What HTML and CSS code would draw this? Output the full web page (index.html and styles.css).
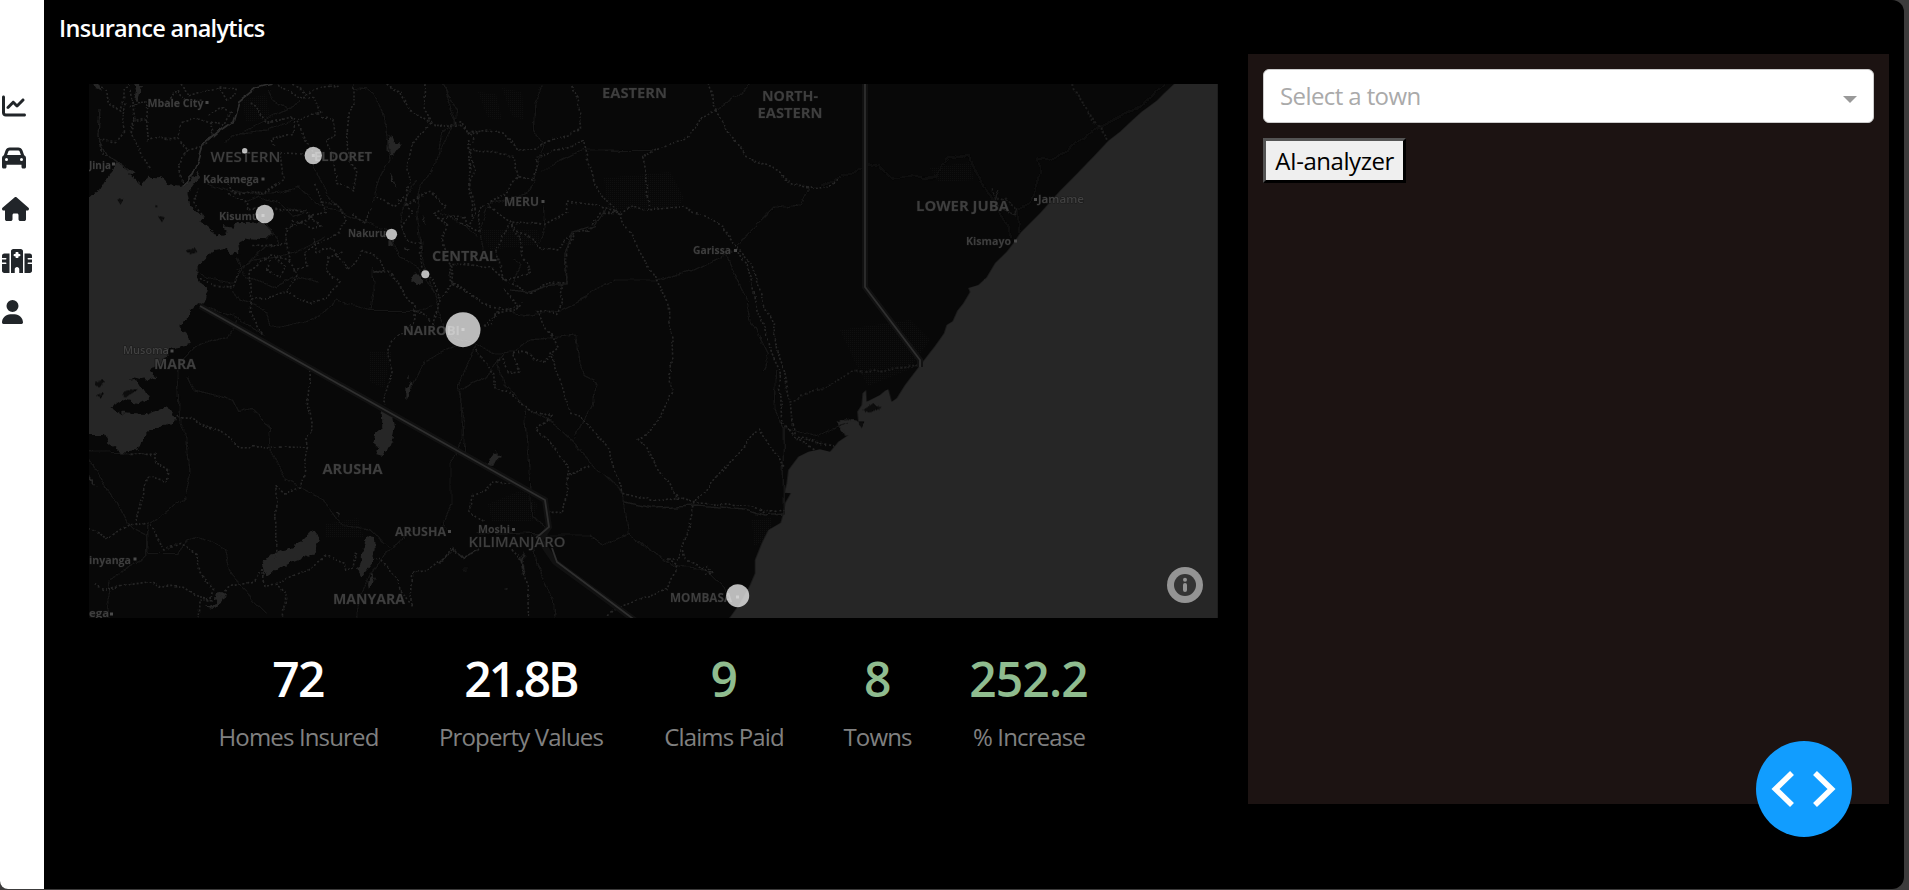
FILE: index.html
```html
<!DOCTYPE html>
<html lang="en">
<head>
<meta charset="utf-8">
<title>Insurance analytics</title>
<link rel="stylesheet" href="styles.css">
</head>
<body>
<div class="app">
  <nav class="sidebar">
    <svg class="nav-icon" viewBox="0 0 512 512"><path d="M64 64c0-17.700-14.300-32-32-32S0 46.300 0 64V400c0 44.200 35.800 80 80 80H480c17.700 0 32-14.300 32-32s-14.300-32-32-32H80c-8.800 0-16-7.200-16-16V64zm406.600 86.600c12.500-12.500 12.500-32.800 0-45.300s-32.800-12.500-45.300 0L320 210.700l-57.400-57.400c-12.500-12.500-32.800-12.500-45.300 0l-112 112c-12.500 12.500-12.500 32.800 0 45.300s32.800 12.500 45.300 0L240 221.300l57.400 57.400c12.500 12.500 32.800 12.500 45.300 0l128-128z"/></svg>
    <svg class="nav-icon" viewBox="0 0 512 512"><path d="M135.200 117.400L109.100 192H402.900l-26.100-74.600C372.300 104.600 360.200 96 346.600 96H165.400c-13.600 0-25.700 8.600-30.200 21.400zM39.600 196.800L74.800 96.300C88.300 57.800 124.600 32 165.400 32H346.600c40.800 0 77.100 25.800 90.600 64.300l35.200 100.500c23.200 9.600 39.600 32.500 39.600 59.200V448c0 17.700-14.300 32-32 32H448c-17.700 0-32-14.300-32-32V400H96v48c0 17.700-14.300 32-32 32H32c-17.700 0-32-14.300-32-32V256c0-26.700 16.400-49.600 39.600-59.200zM128 288a32 32 0 1 0-64 0 32 32 0 1 0 64 0zm288 32a32 32 0 1 0 0-64 32 32 0 1 0 0 64z"/></svg>
    <svg class="nav-icon w27" viewBox="0 0 576 512"><path d="M575.800 255.500c0 18-15 32.100-32 32.100h-32l.7 160.200c0 2.700-.2 5.400-.5 8.100V472c0 22.100-17.900 40-40 40H392c-22.100 0-40-17.900-40-40V384c0-17.700-14.300-32-32-32H256c-17.700 0-32 14.300-32 32v88c0 22.100-17.900 40-40 40H104c-22.100 0-40-17.900-40-40V287.600H32c-18 0-32-14-32-32.100c0-9 3-17 10-24L266.400 8c7-7 15-8 22-8s15 2 21 7L564.800 231.500c8 7 12 15 11 24z"/></svg>
    <svg class="nav-icon w30" viewBox="0 0 640 512"><path d="M192 48c0-26.500 21.500-48 48-48H400c26.500 0 48 21.500 48 48V512H368V432c0-26.500-21.500-48-48-48s-48 21.500-48 48v80H192V48zM48 96H160V512H48c-26.500 0-48-21.500-48-48V320H80c8.800 0 16-7.200 16-16s-7.200-16-16-16H0V224H80c8.800 0 16-7.200 16-16s-7.200-16-16-16H0V144c0-26.500 21.500-48 48-48zm432 0H592c26.500 0 48 21.500 48 48v48H560c-8.800 0-16 7.200-16 16s7.200 16 16 16h80v64H560c-8.800 0-16 7.200-16 16s7.200 16 16 16h80V464c0 26.500-21.500 48-48 48H480V96zM304 64c-8.800 0-16 7.200-16 16v24H264c-8.800 0-16 7.200-16 16v16c0 8.800 7.200 16 16 16h24v24c0 8.800 7.200 16 16 16h32c8.800 0 16-7.200 16-16V152h24c8.800 0 16-7.200 16-16V120c0-8.800-7.200-16-16-16H352V80c0-8.800-7.200-16-16-16H304z" fill-rule="evenodd"/></svg>
    <svg class="nav-icon w21" viewBox="0 0 448 512"><path d="M224 256A128 128 0 1 0 224 0a128 128 0 1 0 0 256zm-45.700 48C79.800 304 0 383.800 0 482.300C0 498.700 13.300 512 29.700 512H418.300c16.400 0 29.700-13.300 29.700-29.700C448 383.800 368.200 304 269.700 304H178.300z"/></svg>
  </nav>

  <main class="content">
    <section class="left">
      <h1 class="title">Insurance analytics</h1>
      <div class="map">
        <svg class="map-canvas" viewBox="89 84 1129 534">
          <defs>
            <filter id="shore" x="-5%" y="-5%" width="110%" height="110%"><feTurbulence type="fractalNoise" baseFrequency="0.12" numOctaves="3" seed="4"/><feDisplacementMap in="SourceGraphic" scale="8" xChannelSelector="R" yChannelSelector="G"/></filter>
            <filter id="wobble" x="-5%" y="-5%" width="110%" height="110%"><feTurbulence type="fractalNoise" baseFrequency="0.05" numOctaves="3" seed="9"/><feDisplacementMap in="SourceGraphic" scale="7" xChannelSelector="R" yChannelSelector="G"/></filter>
            <pattern id="dots" width="2" height="2" patternUnits="userSpaceOnUse"><rect width="1" height="1" fill="#0f0f0f"/></pattern>
          </defs>

          <!-- parks -->
          <g fill="url(#dots)">
            <path d="M242 100l24-6 4 24-24 4zM604 178l66-6 14 26-8 12-68 0zM478 92l18 2 6 26-14-2zM502 88l20 4 2 28-12-4zM488 504l34-14 16 14-6 18-40 0zM840 330l70-10 20 20-22 30-40 16-12-22zM930 168l40-6 4 18-36 2zM480 230l58 0 2 14-50 6zM752 520l20-2-2 20-16 8zM370 352l22 0-8 36-14-6zM326 524l32-6 6 20-38 0z"/>
          </g>

          <!-- water -->
          <g class="water">
            <g filter="url(#shore)">
              <g transform="translate(80 70) scale(.33333)">
                <path d="M10 385L60 360 80 325 100 300 112 272 130 295 170 300 150 315 185 345 205 320 245 322 265 345 300 350 330 335 358 300 350 335 325 365 330 400 345 420 370 440 365 455 395 480 408 500 440 490 428 465 460 470 480 455 550 458 578 490 560 508 500 505 475 520 478 550 455 555 435 535 405 540 380 555 350 585 350 630 385 655 375 690 360 705 330 720 325 745 295 770 325 800 330 825 275 835 245 880 210 900 232 920 185 930 150 925 195 960 205 985 180 1000 125 990 90 1015 135 1030 200 1035 240 1020 262 1005 288 1050 245 1070 200 1085 175 1140 125 1145 85 1115 75 1095 10 1095z"/>
                <path d="M32 30l20 10 18 22-25-8zM162 42l24 4-12 50-12-2 6-30z"/>
                <path d="M920 210l12-14 12 22 16 2-12 22-12 18-16-20zM930 305l10 20 6 26-10-16zM950 385l8 4-4 8zM1028 430l12 30-4 4zM994 622l18-12 18 22-16 14-20-12zM928 508l16 0-2 18-14-4zM975 525l12 16-6 2z"/>
                <path d="M905 1020l38 16 4 30-12 48-20 44-34-6 14-22-14-10 4-30 22-18zM988 908l4 16-4 2zM976 946l10 6 8-16 4 12-10 20-6 18-6-2z"/>
                <path d="M545 1485l25-30 75-25 55-52 24 30-24 42-62 24-80 42zM862 1396l20 2 2 40-6 40-34 42-10-20 12-60zM876 1510l8 20-18 20-2-16zM415 1570l24 0-10 24-24 20-28-4 28-8zM27 1215l20 30-20-12zM770 1325l12 6-8 6z"/>
              </g>
              <g transform="translate(440 340) scale(.33333)">
                <path d="M120 378l22-10 20-34 24 12-36 34zM238 660l16-22-4 30 8 40-16-30zM74 688l12-12-12 16zM190 740l12 2-8 6z"/>
                <path d="M1190 245l30-10 40 10-10 30-40 5z"/>
              </g>
            </g>
            <path transform="translate(820 70) scale(.33333)" d="M1062 42L1030 72 1010 92 965 125 940 148 900 185 865 212 825 255 770 312 720 362 660 430 600 490 580 520 560 545 525 580 500 622 475 645 445 654 450 666 430 700 412 722 398 754 380 765 372 790 345 828 300 886 255 945 230 985 215 995 205 958 195 962 180 975 140 995 138 960 128 970 125 1005 112 1025 115 1055 60 1050 55 1070 72 1080 75 1098 85 1095 55 1115 30 1145 0 1138-35 1145-65 1160-95 1200-100 1240-107 1268-88 1270-105 1300-110 1330-118 1358-155 1380-175 1420-195 1470-195 1510-210 1545-240 1600-272 1645H1194V42z"/>
          </g>
          <g class="islands" filter="url(#shore)" transform="translate(80 70) scale(.33333)">
            <path d="M112 388l18-2-8 18zM234 438l20 4-8 14zM320 540l26-4 6 10-22 6zM46 935l26-4-12 20-12-4zM50 975l22-6-8 14zM130 965l44-8-20 14-22 10zM226 405l8 4-6 4z"/>
            <path d="M2350 1020l30-20 14 14-24 14zM2390 1010l14 2-14 10zM2335 1055l18 0-8 20z"/>
          </g>

          <!-- roads -->
          <g class="roads" filter="url(#wobble)">
            <g transform="translate(80 70) scale(.33333)">
              <path d="M568 60L580 90 625 118 660 90M625 118L560 150 480 190 430 215M480 190L560 180 640 150M825 55L860 60 900 100 918 180 930 270 890 340 880 400M1085 42L1100 90 1130 160 1085 190 1070 280 1025 340 1010 420 1020 500 1030 580 1060 660 1085 740M700 285L740 370 800 430 880 470 930 480M554 460L600 520 560 530 500 580 460 640 380 625 350 600M460 660L480 690 560 720 570 770 600 775 700 750 770 690 870 725 1000 725 1060 710M875 590L880 660 870 725M930 500L960 560 1020 600 1080 690M360 705L460 735 550 800M300 880L350 830 440 800 470 750M660 350L600 370 520 375 450 360 380 340M650 350L720 410 800 425M620 410L680 420 640 440 600 400 540 380 490 400M470 560L500 620 590 650 640 620 720 640M740 500L660 540 600 560 520 570 470 600M1010 330L960 430 980 500"/>
              <path d="M290 900L300 1060 320 1100 330 1210 310 1290 200 1370 200 1460 90 1530 80 1600 90 1645M27 1165L90 1270 150 1370 200 1400 205 1450M27 1145L200 1150M320 920L340 960 460 990 480 1025 515 1015 575 1080 570 1130 620 1230 730 1290 790 1370 870 1380 930 1435M320 1410L350 1400 440 1440 460 1520 520 1590 560 1630M205 1450L290 1450 320 1410M1010 1370L940 1430 880 1500 840 1570 830 1645M1130 830L1030 870 990 960M1270 850L1220 920 1140 960 1150 1100 1110 1180 1110 1300 1090 1360 1110 1385"/>
            </g>
            <g transform="translate(440 70) scale(.33333)">
              <path d="M5 42L20 80 50 120 45 160 0 240M310 45L285 100 280 180 315 230 280 300 285 330 260 370 150 400 120 490 130 540M300 300L400 250 440 240 640 242M935 42L835 120M1110 355L1080 405 1000 415 890 530M880 545L760 600 650 630 520 630 440 680 360 720 240 740 200 710M855 560L920 680 935 760 985 850 970 900M0 740L20 800 100 820 160 850 230 845 270 810 410 795 420 880 430 920 468 940 460 1010 400 1105M110 830L70 900 55 950 75 1060 70 1150M175 870L190 950 260 1010 370 1080 440 1170 500 1220 550 1270 565 1390 630 1440 700 1490 800 1500 850 1550 860 1570M255 1010L270 1200 275 1340 320 1370M110 1385L310 1395 450 1395 490 1425 570 1390M280 1400L290 1480 340 1590 345 1645M0 430L60 460 110 500M310 410L315 480 300 520M220 570L240 580 220 640M1010 900L1005 1020 1030 1080 1030 1330M1030 1075L1130 1100 1220 1060"/>
            </g>
            <path transform="translate(820 70) scale(.33333)" d="M0 345L50 325 150 280 180 290 210 325 270 320 345 325 385 265 450 258 460 300 510 370 575 500M600 490L590 420 630 400 660 310 650 265 690 270 740 245 820 180 900 140 1000 80 1035 42"/>
          </g>

          <!-- county lines -->
          <g class="dotted" filter="url(#wobble)">
            <g transform="translate(80 70) scale(.33333)">
              <path d="M50 45L75 60 90 100 125 120 130 60 150 42M135 100L130 190 110 215 60 210M150 60L165 150 200 150 205 90 150 110M165 150L150 190 180 240 210 300M200 150L205 215 240 200 295 205 310 160 350 145 390 160 400 190 380 230 320 240 295 210M240 110L290 60 320 95 370 90M300 42L330 80 390 60 430 50 480 60M320 240L295 290 310 340M60 210L70 250 110 275M385 135L420 110 450 125 430 165 400 160M420 55L440 90 470 70M510 95L560 160 640 140 640 190 570 210 580 230M590 42L650 80 700 80 720 130 650 150 670 210 700 250M640 42L680 70 720 50 780 42M720 140L755 145 765 200 740 210 760 260 770 340 820 360 830 310 805 270 800 200 808 130 825 100 825 42M920 42L960 70 990 120 1050 160 1045 170 1000 210 980 290 990 340 980 400M1035 42L1030 120 1060 170 1140 165 1165 190 1200 190M600 245L610 330 560 370 470 370 440 340M600 245L680 250M350 350L345 400 370 440M450 370L500 400 500 420 540 415M580 415L680 420 690 440 740 430 720 380 700 340M560 370L610 340M690 440L720 465 690 470 640 455 620 500 630 570 570 555 510 600 515 690 620 665 690 705 740 680 780 635 740 600 750 560 790 540M620 480L700 440M630 570L650 610 620 665M565 570L560 600 600 620 615 590 580 555M700 500L710 550 760 530 800 605 850 545 900 570 920 595 880 600 930 600M520 530L620 520M640 600L680 590 670 550 700 530 780 490 800 440 770 400 720 400M360 625L400 650 460 650 480 600M515 690L510 730 545 800M930 600L960 650 980 680 1005 710 1000 760 940 810 925 840 935 900 920 950 918 1010M890 380L940 410 980 380M975 400L1000 420 970 470 980 510 1020 520 1025 590 1060 630 1080 690 1075 730 1060 760 1040 740 1000 720M980 400L1050 370 1100 410 1060 430 1105 470 1085 510 1100 560 1120 590 1115 640 1080 680M1115 640L1200 690M1160 210L1170 350 1185 430 1155 470 1120 440M820 430L850 460 880 420"/>
              <path d="M290 1040L330 1042 370 1065 415 1080 475 1130 685 1132 680 1100 698 1080 682 1000 692 900M685 1132L662 1250 618 1275 588 1250 587 1470M27 1375L80 1405 120 1385 145 1365 205 1360 255 1440 300 1420 350 1455 360 1510 398 1560 392 1590 360 1590 358 1645M165 1365L190 1260 200 1225 265 1230 270 1200 225 1170 225 1150 145 1150M40 1540L65 1555 210 1535 240 1550 310 1555 340 1575 400 1590 450 1550 520 1530 548 1500 555 1550 620 1530 680 1500 735 1460 795 1480 800 1500 822 1495 830 1440M595 1545L615 1570 610 1640M885 1465L900 1465 950 1530 992 1610 998 1510 1045 1505 1110 1450 1120 1435 1150 1465 1200 1440"/>
            </g>
            <g transform="translate(440 70) scale(.33333)">
              <path d="M0 172L65 155 80 190 150 180 195 190 230 240 280 240 330 215 400 185 425 180 415 90 395 60 392 42M80 190L100 200 80 242 222 260 235 320 200 370 130 410 115 430 120 490 75 465 70 440 0 450M85 250L100 300 88 370 95 440M235 320L275 330 290 265 430 213 465 340 540 440 650 630 688 710 697 900 690 910 700 960 640 1080 595 1108 715 1280M148 410L210 455 310 468 380 430 380 400 440 395 520 425 540 435 570 415 625 420 730 410 800 440 850 470 885 530 940 590 970 700 1000 760 1010 840 1033 900 1050 990 1060 1100 1180 1125M210 455L170 540 190 630 265 615 260 580 245 560 240 500 215 460 300 530 350 540 380 510 410 485 450 480 480 430 540 430M625 420L625 340 605 260 650 240 745 205 780 150 830 120 805 42M830 120L870 195 920 260 1000 295 1060 340 1110 355 1170 345 1200 320M195 630L270 670 330 635 380 640 380 540 405 490M190 660L240 710 200 715 130 700 30 630 35 580 150 590 195 630M190 720L170 720 160 760 130 770 180 720 230 720 250 700M365 640L360 680 370 690 350 730 290 725 355 830 330 850 350 900 395 1030 425 1040 500 1130 550 1270 640 1295 700 1280 760 1298 860 1305 940 1310 970 1330 1030 1320M110 840L130 870 165 910 165 960 200 970 260 1010 330 1042 290 1080 390 1190 370 1330 320 1330M390 1215L455 1188M175 870L190 870 205 905 240 900 220 850 260 850 310 880 340 850M765 1295L958 1078 1035 1190M762 1298L715 1470 685 1470 710 1490 685 1555 550 1605 500 1640M730 1440L740 1470 780 1490 820 1510M800 1485L820 1510 795 1515M220 1235L155 1240 130 1265 100 1275 90 1325 135 1360M210 1440L240 1470M0 1480L35 1435 70 1465 120 1440M250 1510L265 1600 265 1645M890 550L920 580 940 660 970 780 1000 860 1020 900 1025 1060 1060 1100 1130 1135"/>
            </g>
            <path transform="translate(820 70) scale(.33333)" d="M752 45L865 210M-90 995L0 955 105 905 297 888M520 355L525 385 560 390 590 420"/>
          </g>
          <path class="river" filter="url(#wobble)" d="M100 108l-2 28 10 20 20 14M509 290l20 2 24-8 14 0-2-30 8-22 22-6 10-16M625 502l30 6 40-2 50 4 20 6 17-2M1000 190l-6 12 20 14 3-8"/>

          <!-- national borders -->
          <g class="halo"><path d="M200 306L545 500 549 527 540 540 555 562 640 624M865 84V287L920 360 920 367"/></g>
          <g class="border"><path d="M200 306L545 500 549 527 536 538M552 548L557 562 640 624M865 84V287L920 360 920 367"/><path filter="url(#wobble)" d="M272 84l-15 4-18 14-6 20-14 10-16 14-4 14-6 14-10 10"/></g>

          <!-- place names -->
          <g class="labels city">
            <text x="147.500" y="107" textLength="56" lengthAdjust="spacingAndGlyphs">Mbale City</text><text x="89" y="169" textLength="22" lengthAdjust="spacingAndGlyphs">Jinja</text>
            <text x="203" y="183" textLength="56" lengthAdjust="spacingAndGlyphs">Kakamega</text><text x="219" y="219.500" textLength="40" lengthAdjust="spacingAndGlyphs">Kisumu</text>
            <text x="348" y="237" textLength="38" lengthAdjust="spacingAndGlyphs">Nakuru</text><text class="thin" x="123" y="354" textLength="46" lengthAdjust="spacingAndGlyphs">Musoma</text>
            <text x="89" y="563.500" textLength="42" lengthAdjust="spacingAndGlyphs">inyanga</text><text x="89" y="617" textLength="20" lengthAdjust="spacingAndGlyphs">ega</text>
            <text x="693" y="254" textLength="38" lengthAdjust="spacingAndGlyphs">Garissa</text><text x="966" y="245" textLength="45" lengthAdjust="spacingAndGlyphs">Kismayo</text>
            <text class="thin" x="1038" y="203" textLength="46" lengthAdjust="spacingAndGlyphs">Jamame</text><text x="478" y="533" textLength="32" lengthAdjust="spacingAndGlyphs">Moshi</text>
          </g>
          <g class="labels bigcity">
            <text x="314" y="160.500" textLength="58" lengthAdjust="spacingAndGlyphs">ELDORET</text><text x="403" y="335" textLength="57" lengthAdjust="spacingAndGlyphs">NAIROBI</text>
            <text x="504" y="205.500" textLength="35" lengthAdjust="spacingAndGlyphs">MERU</text><text x="395" y="536" textLength="51" lengthAdjust="spacingAndGlyphs">ARUSHA</text>
            <text x="670" y="602" textLength="62" lengthAdjust="spacingAndGlyphs">MOMBASA</text>
          </g>
          <g class="labels region">
            <text class="thin" x="210.500" y="162" textLength="70" lengthAdjust="spacingAndGlyphs">WESTERN</text><text x="602" y="97.500" textLength="65" lengthAdjust="spacingAndGlyphs">EASTERN</text>
            <text x="762" y="101" textLength="56" lengthAdjust="spacingAndGlyphs">NORTH-</text><text x="757.500" y="117.700" textLength="65" lengthAdjust="spacingAndGlyphs">EASTERN</text>
            <text x="432" y="260.500" textLength="65" lengthAdjust="spacingAndGlyphs">CENTRAL</text><text x="916" y="211" textLength="93" lengthAdjust="spacingAndGlyphs">LOWER JUBA</text>
            <text x="154" y="369" textLength="42" lengthAdjust="spacingAndGlyphs">MARA</text><text x="322.500" y="473.500" textLength="60" lengthAdjust="spacingAndGlyphs">ARUSHA</text>
            <text class="thin" x="468.500" y="547" textLength="97" lengthAdjust="spacingAndGlyphs">KILIMANJARO</text><text x="333" y="604" textLength="72" lengthAdjust="spacingAndGlyphs">MANYARA</text>
          </g>
          <g class="town">
            <path d="M205.500 101h3v3h-3zM112 162.500h3v3h-3zM261.500 177.500h3v3h-3zM170.500 349.500h3v3h-3zM133.500 557.500h3v3h-3zM110 612.500h3v3h-3zM448 530h3v3h-3zM541.500 200h3v3h-3zM512 528h3v3h-3zM734 249h3v3h-3zM1014 239.500h3v3h-3zM1034 198h3v3h-3z"/>
          </g>

          <!-- town bubbles -->
          <g class="bubbles">
            <circle cx="244.700" cy="150.700" r="2.700"/><circle cx="313.300" cy="155.500" r="8.700"/>
            <circle cx="264.700" cy="214" r="9.200"/><circle cx="391.500" cy="234.300" r="5.600"/>
            <circle cx="425.300" cy="274.300" r="4"/><circle cx="463" cy="329.700" r="17.500"/>
            <circle cx="737.700" cy="595.700" r="11.500"/>
          </g>
          <g class="bubble-dots"><path d="M311.800 154h3v3h-3zM261.500 214h3v3h-3zM461.500 328h3v3h-3zM736 595.500h3v3h-3z"/></g>
        </svg>
        <svg class="info" viewBox="0 0 36 36"><circle cx="18" cy="18" r="18" fill="#949494"/><circle cx="18" cy="18" r="11" fill="#343434"/><circle cx="18" cy="12.700" r="2" fill="#949494"/><rect x="16" y="16" width="4" height="9" rx="2" fill="#949494"/></svg>
      </div>
      <div class="stats">
        <div class="stat s1"><div class="value">72</div><div class="label">Homes Insured</div></div>
        <div class="stat s2"><div class="value tight">21.8B</div><div class="label">Property Values</div></div>
        <div class="stat s3 green"><div class="value">9</div><div class="label">Claims Paid</div></div>
        <div class="stat s4 green"><div class="value">8</div><div class="label">Towns</div></div>
        <div class="stat s5 green"><div class="value wide">252.2</div><div class="label">% Increase</div></div>
      </div>
    </section>
    <aside class="panel">
      <div class="select"><span class="placeholder">Select a town</span><span class="arrow"></span></div>
      <button class="analyzer">AI-analyzer</button>
    </aside>
  </main>
  <div class="fab"><svg viewBox="0 0 96 96"><path d="M36 32L19.500 48 36 64M59 32L75.500 48 59 64" fill="none" stroke="#fff" stroke-width="5.600"/></svg></div>
</div>
</body>
</html>
```
FILE: styles.css
```css
* { box-sizing: border-box; }
body {
  margin: 0;
  height: 890px;
  overflow: hidden;
  background: #3c3b3b;
  font-family: "Open Sans", "Noto Sans", sans-serif;
  font-size: 24px;
}
.app {
  position: relative;
  display: flex;
  width: 1904px;
  height: 889px;
  border-radius: 0 12px 12px 8px;
  overflow: hidden;
  background: #000;
}
.sidebar {
  width: 44px;
  flex: none;
  background: #fff;
  padding: 94px 0 0 2px;
  display: flex;
  flex-direction: column;
  gap: 27.5px;
}
.nav-icon { width: 24px; height: 24px; fill: #212529; display: block; }
.w27 { width: 27px; }
.w30 { width: 30px; }
.w21 { width: 21px; }

.content { flex: 1; display: flex; align-items: flex-start; }
.left { width: 1204px; flex: none; }
.title {
  margin: 0 0 0 15px;
  height: 84px;
  padding-top: 11px;
  color: #fff;
  font-size: 23.5px;
  font-weight: 650;
  line-height: 34px;
  letter-spacing: -0.7px;
  white-space: nowrap;
}
.map {
  position: relative;
  width: 1129px;
  height: 534px;
  margin-left: 45px;
  background: #080808;
  overflow: hidden;
}
.map-canvas { display: block; width: 1129px; height: 534px; }
.info { position: absolute; right: 15px; bottom: 15px; width: 36px; height: 36px; }
.water { fill: #262626; }
.islands { fill: #080808; }
.roads path { fill: none; stroke: #141414; stroke-width: 4; }
.dotted path { fill: none; stroke: #282828; stroke-width: 4.8; stroke-dasharray: 6 6; }
.river { fill: none; stroke: #1b1b1b; stroke-width: 1.4; }
.halo path { fill: none; stroke: #111; stroke-width: 6; }
.border path { fill: none; stroke: #2f2f2f; stroke-width: 1.8; }
.labels { font-family: "Open Sans", sans-serif; font-weight: 700; fill: #3e3e3e; stroke: #111; stroke-width: 1px; paint-order: stroke; }
.labels.city { font-size: 11px; }
.labels.bigcity { font-size: 12.5px; }
.labels.region { font-size: 14px; }
.labels .thin { font-weight: 600; }
.labels.city .thin { fill: #424242; stroke: #1a1a1a; }
.town { fill: #4a4a4a; }
.bubbles { fill: #fff; fill-opacity: .72; }
.bubble-dots { fill: #d0d0d0; }

.stats { display: flex; justify-content: center; gap: 60px; margin-left: 45px; width: 1129px; padding-top: 24px; }
.stat { text-align: center; white-space: nowrap; color: #fff; display: flex; flex-direction: column; align-items: center; }
.s1 { width: 160px; }
.s2 { width: 165px; }
.s3 { width: 121px; }
.s4 { width: 66px; }
.s5 { width: 117px; }
.value { font-size: 48px; line-height: 74px; font-weight: 650; letter-spacing: -1.6px; margin-right: 2px; }
.value.tight { letter-spacing: -2.9px; }
.value.wide { letter-spacing: -0.9px; }
.green .value { color: #8fbc8f; }
.label { font-size: 24px; line-height: 36px; margin-top: 3px; color: #808080; letter-spacing: -0.85px; margin-right: 1px; }

.panel {
  width: 641px;
  height: 750px;
  margin-top: 54px;
  padding: 15px;
  background: #1c1312;
}
.select {
  height: 54px;
  border: 1px solid #ccc;
  border-radius: 6px;
  background: #fff;
  display: flex;
  align-items: center;
  justify-content: space-between;
  padding: 0 16px;
}
.placeholder { color: #aaa; letter-spacing: -0.6px; padding-bottom: 1px; }
.arrow { margin-top: 6px; border: 7.500px solid transparent; border-top-color: #999; border-bottom: 0; }
.analyzer {
  display: block;
  margin-top: 15px;
  width: 143px;
  height: 45px;
  padding: 0;
  border: 3px outset #000;
  background: #efefef;
  color: #000;
  font: 24px/36px "Open Sans", sans-serif;
  letter-spacing: -0.45px;
}
.fab {
  position: absolute;
  left: 1756px;
  top: 741px;
  width: 96px;
  height: 96px;
  border-radius: 50%;
  background: #119dff;
}
.fab svg { display: block; }
```
